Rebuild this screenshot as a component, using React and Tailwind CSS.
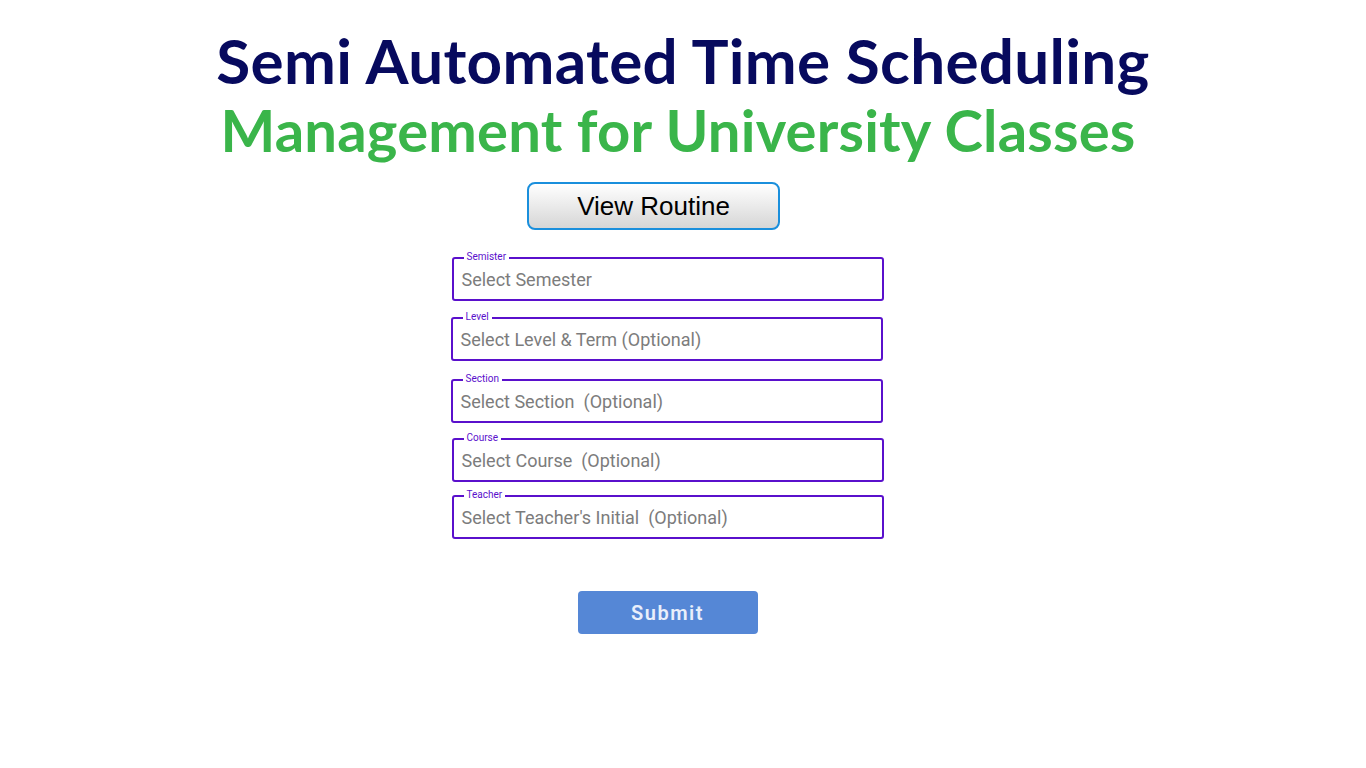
const fields = [
  { label: 'Semister', placeholder: 'Select Semester', mt: 'mt-[27px]', shift: 'ml-[1px]' },
  { label: 'Level', placeholder: 'Select Level & Term (Optional)', mt: 'mt-[16px]', shift: '' },
  { label: 'Section', placeholder: 'Select Section  (Optional)', mt: 'mt-[18px]', shift: '' },
  { label: 'Course', placeholder: 'Select Course  (Optional)', mt: 'mt-[15px]', shift: 'ml-[1px]' },
  { label: 'Teacher', placeholder: "Select Teacher's Initial  (Optional)", mt: 'mt-[13px]', shift: 'ml-[1px]' },
];

function Field({ label, placeholder, mt, shift }) {
  return (
    <div className={`relative ${mt} ${shift} h-[44px] w-[432px] rounded-[3px] border-2 border-[#5a10cc]`}>
      <span className="absolute -top-[8px] left-[10px] bg-white px-[3px] text-[10px] leading-[12px] text-[#5a10cc] [font-family:Roboto,sans-serif]">
        {label}
      </span>
      <div className="flex h-full items-center whitespace-pre pl-[8px] text-[18px] text-[#7c7c7c] [font-family:Roboto,sans-serif]">
        {placeholder}
      </div>
    </div>
  );
}

export default function App() {
  return (
    <div className="flex min-h-[768px] w-full flex-col items-center bg-white [font-family:Lato,sans-serif]">
      <h1 className="mt-[24px] text-[62px] font-bold leading-[72px] tracking-[0.3px] text-[#070a5e]">
        Semi Automated Time Scheduling
      </h1>
      <h2 className="mr-[10px] text-[58px] font-bold leading-[68px] tracking-[0.2px] text-[#3ab54a]">
        Management for University Classes
      </h2>

      <button
        type="button"
        className="mr-[59px] mt-[18px] h-[48px] w-[253px] rounded-[8px] border-2 border-[#1a8fdc] bg-gradient-to-b from-white to-[#d6d6d6] text-[26px] leading-none text-black [font-family:'Liberation_Sans',Arial,sans-serif]"
      >
        View Routine
      </button>

      <div className="mr-[32px] flex flex-col">
        {fields.map((f) => (
          <Field key={f.label} {...f} />
        ))}
      </div>

      <button
        type="button"
        className="mr-[31px] mt-[52px] h-[43px] w-[180px] rounded-[4px] bg-[#5587d6] text-[20px] font-semibold tracking-[1.5px] text-[#e8effb] [font-family:Roboto,sans-serif]"
      >
        Submit
      </button>
    </div>
  );
}
